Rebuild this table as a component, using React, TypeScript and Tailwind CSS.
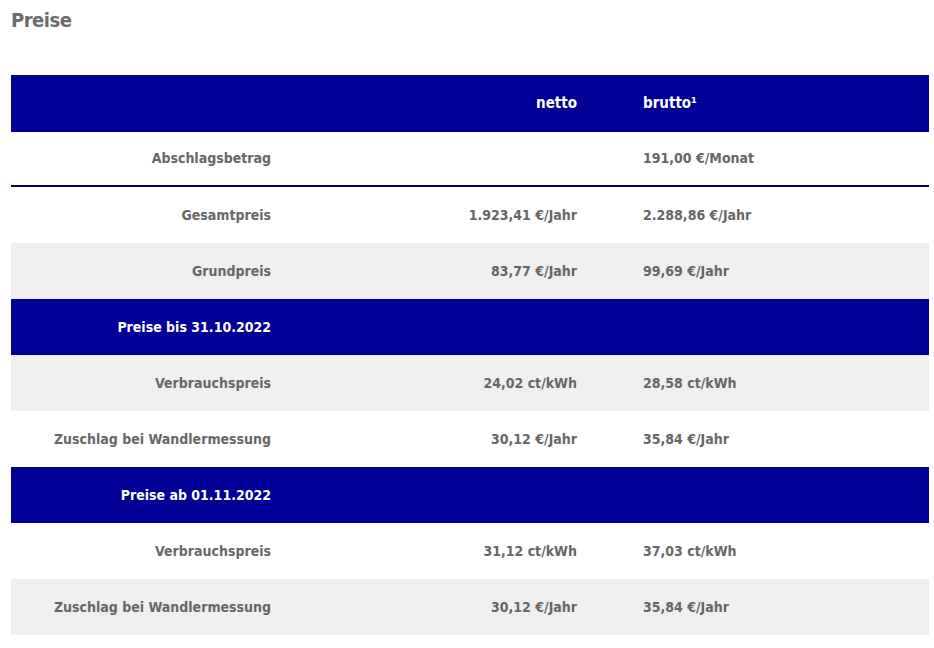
import React from 'react'

type Row =
  | { kind: 'head'; label: string }
  | { kind: 'row'; label: string; netto: string; brutto: string; gray?: boolean; line?: boolean }

const rows: Row[] = [
  { kind: 'row', label: 'Abschlagsbetrag', netto: '', brutto: '191,00 €/Monat', line: true },
  { kind: 'row', label: 'Gesamtpreis', netto: '1.923,41 €/Jahr', brutto: '2.288,86 €/Jahr' },
  { kind: 'row', label: 'Grundpreis', netto: '83,77 €/Jahr', brutto: '99,69 €/Jahr', gray: true },
  { kind: 'head', label: 'Preise bis 31.10.2022' },
  { kind: 'row', label: 'Verbrauchspreis', netto: '24,02 ct/kWh', brutto: '28,58 ct/kWh', gray: true },
  { kind: 'row', label: 'Zuschlag bei Wandlermessung', netto: '30,12 €/Jahr', brutto: '35,84 €/Jahr' },
  { kind: 'head', label: 'Preise ab 01.11.2022' },
  { kind: 'row', label: 'Verbrauchspreis', netto: '31,12 ct/kWh', brutto: '37,03 ct/kWh' },
  { kind: 'row', label: 'Zuschlag bei Wandlermessung', netto: '30,12 €/Jahr', brutto: '35,84 €/Jahr', gray: true },
]

const grid = 'grid grid-cols-[280px_306px_1fr] items-center'

export default function App() {
  return (
    <div className="min-h-screen bg-white px-[11px] pt-[6px] font-['DejaVu_Sans_Condensed','DejaVu_Sans',sans-serif] font-bold text-[#666666] w-[934px]">
      <h2 className="text-[20px] leading-[28px] text-[#6b6b6b] tracking-[-0.5px]">Preise</h2>
      <div className="mt-[41px] w-[918px] text-[14px]">
        <div className={`${grid} h-[57px] bg-[#000096] text-white text-[15px]`}>
          <div />
          <div className="text-right pr-[20px]">netto</div>
          <div className="pl-[46px]">brutto¹</div>
        </div>
        {rows.map((r, i) =>
          r.kind === 'head' ? (
            <div key={i} className={`${grid} h-[56px] bg-[#000096] text-white`}>
              <div className="text-right pr-[20px]">{r.label}</div>
              <div />
              <div />
            </div>
          ) : (
            <div
              key={i}
              className={`${grid} ${r.line ? 'h-[55px] border-b-2 border-[#000066]' : 'h-[56px]'} ${r.gray ? 'bg-[#efefef]' : 'bg-white'}`}
            >
              <div className="text-right pr-[20px]">{r.label}</div>
              <div className="text-right pr-[20px]">{r.netto}</div>
              <div className="pl-[46px]">{r.brutto}</div>
            </div>
          ),
        )}
      </div>
    </div>
  )
}
